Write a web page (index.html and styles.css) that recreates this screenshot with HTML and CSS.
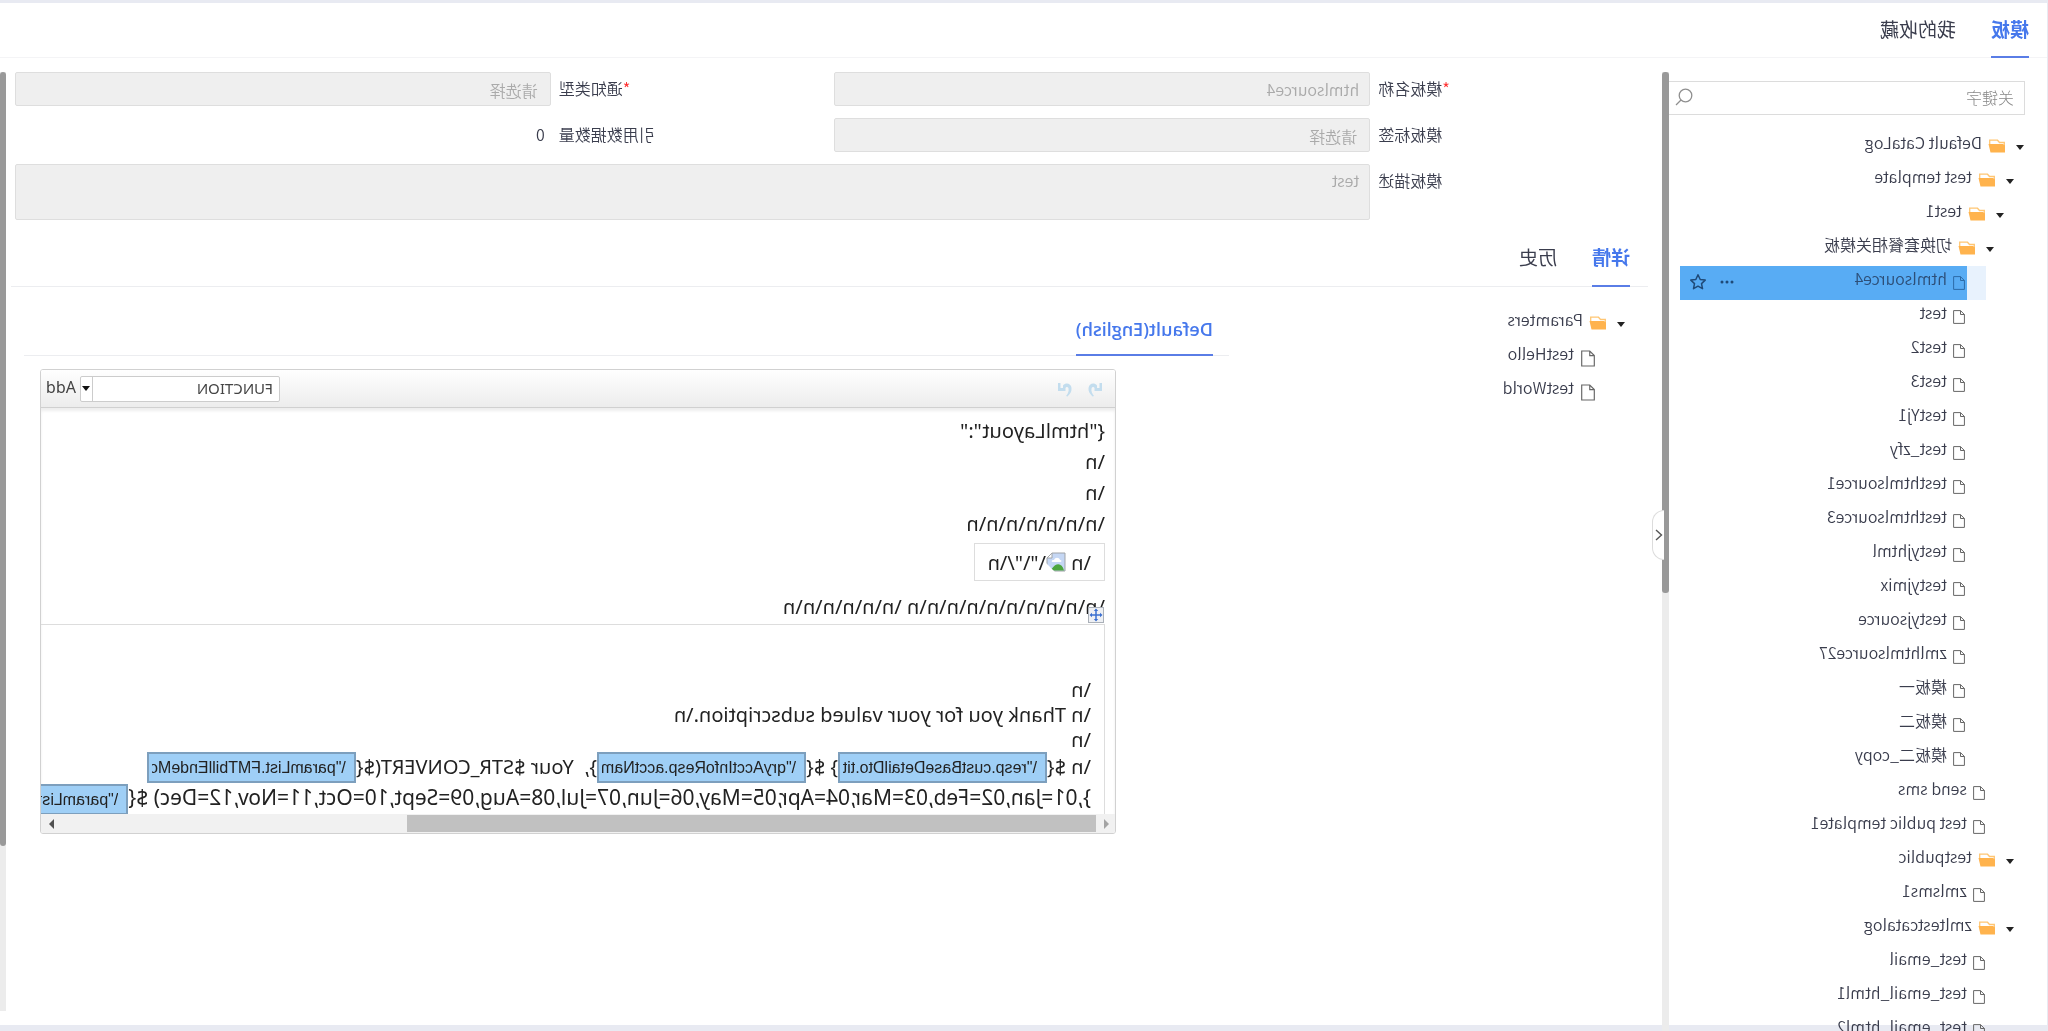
FILE: index.html
```html
<!DOCTYPE html>
<html lang="zh-CN">
<head>
<meta charset="utf-8">
<title>模板</title>
<link rel="stylesheet" href="styles.css">
</head>
<body>
<svg class="defs" aria-hidden="true">
  <symbol id="folder" viewBox="0 0 18 14"><path d="M1.700 13V3.500h4.800l2-2.300H16.300V6" fill="none" stroke="#ffc673" stroke-width="1.300"/><path d="M1 13.500V6.500l2-1.500H17.500l-2 8.500z" fill="#ffb34d"/></symbol>
  <symbol id="file" viewBox="0 0 12 14"><path d="M4.500 .6h6.900v12.800H.6V4.500zM4.500 .6v3.900H.6" fill="none" stroke="currentColor" stroke-width="1"/></symbol>
  <symbol id="undo" viewBox="0 0 16 16"><path d="M1 2h2.500v5H6V4.500C9 1 14 2.500 14.500 7c.4 3.500-1.500 6-4 8.500L9 15c2-2.500 3-5 2.500-7.500C11 5.500 9 5.500 8.500 7v3H1z" fill="#c3ddee"/></symbol>
</svg>
<div class="panel">
  <nav class="tabs top-tabs"><a href="#" class="tab active">模板</a><a href="#" class="tab">我的收藏</a></nav>
  <div class="layout">
    <aside class="sidebar">
      <div class="side-body">
        <div class="search">
          <input type="text" placeholder="关键字" aria-label="关键字">
          <svg width="18" height="18" viewBox="0 0 18 18" fill="none" stroke="#8f8f8f" stroke-width="1.300"><circle cx="7.500" cy="7.500" r="6.300"/><path d="m12 12 5 5"/></svg>
        </div>
        <ul class="tree">
          <li><div class="row"><i class="caret"></i><span class="node"><svg class="folder"><use href="#folder"/></svg><span>Default CataLog</span></span></div>
          <ul>
            <li><div class="row"><i class="caret"></i><span class="node"><svg class="folder"><use href="#folder"/></svg><span>test template</span></span></div>
            <ul>
              <li><div class="row"><i class="caret"></i><span class="node"><svg class="folder"><use href="#folder"/></svg><span>test1</span></span></div>
              <ul>
                <li><div class="row"><i class="caret"></i><span class="node"><svg class="folder"><use href="#folder"/></svg><span>切换套餐相关模板</span></span></div>
                <ul>
                  <li><div class="row selected"><i class="slot"></i><span class="node"><svg class="file"><use href="#file"/></svg><span>htmlsource4</span>
                    <span class="tools"><button type="button" aria-label="更多"><svg width="14" height="4" viewBox="0 0 14 4" fill="currentColor"><circle cx="2" cy="2" r="1.500"/><circle cx="7" cy="2" r="1.500"/><circle cx="12" cy="2" r="1.500"/></svg></button><button type="button" aria-label="收藏"><svg width="16" height="16" viewBox="0 0 16 16" fill="none" stroke="currentColor" stroke-width="1.500" stroke-linejoin="round"><path d="m8 .8 2.200 4.700 5 .6-3.700 3.500 1 5.100L8 12.200l-4.500 2.500 1-5.100L.8 6.100l5-.6z"/></svg></button></span></span></div></li>
                  <li><div class="row"><i class="slot"></i><span class="node"><svg class="file"><use href="#file"/></svg><span>test</span></span></div></li>
                  <li><div class="row"><i class="slot"></i><span class="node"><svg class="file"><use href="#file"/></svg><span>test2</span></span></div></li>
                  <li><div class="row"><i class="slot"></i><span class="node"><svg class="file"><use href="#file"/></svg><span>test3</span></span></div></li>
                  <li><div class="row"><i class="slot"></i><span class="node"><svg class="file"><use href="#file"/></svg><span>testYj1</span></span></div></li>
                  <li><div class="row"><i class="slot"></i><span class="node"><svg class="file"><use href="#file"/></svg><span>test_zfy</span></span></div></li>
                  <li><div class="row"><i class="slot"></i><span class="node"><svg class="file"><use href="#file"/></svg><span>testhtmlsource1</span></span></div></li>
                  <li><div class="row"><i class="slot"></i><span class="node"><svg class="file"><use href="#file"/></svg><span>testhtmlsource3</span></span></div></li>
                  <li><div class="row"><i class="slot"></i><span class="node"><svg class="file"><use href="#file"/></svg><span>testyjhtml</span></span></div></li>
                  <li><div class="row"><i class="slot"></i><span class="node"><svg class="file"><use href="#file"/></svg><span>testyjmix</span></span></div></li>
                  <li><div class="row"><i class="slot"></i><span class="node"><svg class="file"><use href="#file"/></svg><span>testyjsource</span></span></div></li>
                  <li><div class="row"><i class="slot"></i><span class="node"><svg class="file"><use href="#file"/></svg><span>zmlhtmlsource27</span></span></div></li>
                  <li><div class="row"><i class="slot"></i><span class="node"><svg class="file"><use href="#file"/></svg><span>模板一</span></span></div></li>
                  <li><div class="row"><i class="slot"></i><span class="node"><svg class="file"><use href="#file"/></svg><span>模板二</span></span></div></li>
                  <li><div class="row"><i class="slot"></i><span class="node"><svg class="file"><use href="#file"/></svg><span>模板二_copy</span></span></div></li>
                </ul></li>
              </ul></li>
              <li><div class="row"><i class="slot"></i><span class="node"><svg class="file"><use href="#file"/></svg><span>send sms</span></span></div></li>
              <li><div class="row"><i class="slot"></i><span class="node"><svg class="file"><use href="#file"/></svg><span>test public template1</span></span></div></li>
            </ul></li>
            <li><div class="row"><i class="caret"></i><span class="node"><svg class="folder"><use href="#folder"/></svg><span>testpublic</span></span></div>
            <ul><li><div class="row"><i class="slot"></i><span class="node"><svg class="file"><use href="#file"/></svg><span>zmlsms1</span></span></div></li></ul></li>
            <li><div class="row"><i class="caret"></i><span class="node"><svg class="folder"><use href="#folder"/></svg><span>zmltestcatalog</span></span></div>
            <ul>
              <li><div class="row"><i class="slot"></i><span class="node"><svg class="file"><use href="#file"/></svg><span>test_email</span></span></div></li>
              <li><div class="row"><i class="slot"></i><span class="node"><svg class="file"><use href="#file"/></svg><span>test_email_html1</span></span></div></li>
              <li><div class="row"><i class="slot"></i><span class="node"><svg class="file"><use href="#file"/></svg><span>test_email_html2</span></span></div></li>
            </ul></li>
          </ul></li>
        </ul>
      </div>
      <div class="vbar"><div class="thumb side-thumb"></div></div>
      <button type="button" class="collapse" aria-label="收起"><svg width="8" height="12" viewBox="0 0 8 12" fill="none" stroke="#555" stroke-width="1.400"><path d="M7 1 1.500 6 7 11"/></svg></button>
    </aside>
    <main class="main">
      <form class="form">
        <label for="name"><b>*</b>模板名称</label><input id="name" type="text" value="htmlsource4" disabled>
        <label for="type"><b>*</b>通知类型</label><select id="type" disabled><option>请选择</option></select>
        <label for="tag">模板标签</label><select id="tag" disabled><option>请选择</option></select>
        <label for="count">引用数据数量</label><output id="count">0</output>
        <label for="desc">模板描述</label><textarea id="desc" class="wide" disabled>test</textarea>
      </form>
      <nav class="tabs detail-tabs"><a href="#" class="tab active">详情</a><a href="#" class="tab">历史</a></nav>
      <div class="detail">
        <ul class="tree params">
          <li><div class="row"><i class="caret"></i><span class="node"><svg class="folder"><use href="#folder"/></svg><span>Paramters</span></span></div>
          <ul>
            <li><div class="row"><i class="slot"></i><span class="node"><svg class="file"><use href="#file"/></svg><span>testHello</span></span></div></li>
            <li><div class="row"><i class="slot"></i><span class="node"><svg class="file"><use href="#file"/></svg><span>testWorld</span></span></div></li>
          </ul></li>
        </ul>
        <section class="content">
          <nav class="tabs lang-tabs"><a href="#" class="tab active">Default(English)</a></nav>
          <div class="editor">
            <div class="toolbar">
              <button type="button" aria-label="Undo"><svg width="16" height="16"><use href="#undo"/></svg></button>
              <button type="button" class="redo" aria-label="Redo"><svg width="16" height="16"><use href="#undo"/></svg></button>
              <div class="combo"><input type="text" value="FUNCTION" aria-label="Function"><button type="button" class="drop" aria-label="Open"><i></i></button></div>
              <button type="button" class="add">Add</button>
            </div>
            <div class="doc">
              <p>{"htmlLayout":"</p>
              <p>\n</p>
              <p>\n</p>
              <p>\n\n\n\n\n\n\n</p>
              <div class="cell">\n <svg width="20" height="20" viewBox="0 0 20 20"><path d="M1 1h13l5 5v13H1z" fill="#c5d7f4" stroke="#a0a4a8"/><path d="M6 8c1-3 5-3 6 0 3 0 3 2 1 2H6c-2 0-2-2 0-2z" fill="#fff"/><path d="M2 18.500c2-8 8-8 12-2l3 2z" fill="#4da63f"/><path d="M14 1v5h5z" fill="#fff" stroke="#a0a4a8"/><path d="M20 11v9h-9z" fill="#fff"/></svg>\"\"/\n</div>
              <p class="long">\n\n\n\n\n\n\n\n\n\n \n\n\n\n\n\n<span class="move"><svg width="16" height="16" viewBox="0 0 16 16"><rect x=".5" y=".5" width="15" height="15" fill="#eef0f4" stroke="#aab0b8"/><path d="M8 3v10M3 8h10" stroke="#3b6fd0" stroke-width="1.500"/><path d="m8 1.500 2.200 2.500H5.800zM8 14.500 5.800 12h4.400zM1.500 8 4 5.800v4.400zM14.500 8 12 10.200V5.800z" fill="#3b6fd0"/></svg></span></p>
              <div class="table">
                <p>\n</p>
                <p>\n Thank you for your valued subscription.\n</p>
                <p>\n</p>
                <p class="vars">\n ${<input type="text" aria-label="title" value="\&quot;resp.custBaseDetailDto.tit">} ${<input type="text" aria-label="account" value="\&quot;qryAcctInfoResp.acctNam">},&nbsp; Your $STR_CONVERT(${<input type="text" aria-label="month" value="\&quot;paramList.FMTbillEndeMo"></p>
                <p class="vars months">},01=Jan,02=Feb,03=Mar,04=Apr,05=May,06=Jun,07=Jul,08=Aug,09=Sept,10=Oct,11=Nov,12=Dec) ${<input type="text" aria-label="param" value="\&quot;paramList.FMTbillEndeMo"></p>
              </div>
            </div>
            <div class="hbar"><i class="arrow prev"></i><div class="hthumb"></div><i class="arrow next"></i></div>
          </div>
        </section>
      </div>
      <div class="vbar"><div class="thumb main-thumb"></div></div>
    </main>
  </div>
</div>
</body>
</html>
```
FILE: styles.css
```css
* { box-sizing: border-box; }
body {
  margin: 0;
  height: 100vh;
  padding: 3px 0 6px 1px;
  overflow: hidden;
  background: #e8eaf2;
  color: #3a3d4d;
  font: 16px/34px "Noto Sans CJK SC", sans-serif;
  /* the whole interface is shown mirrored */
  transform: scaleX(-1);
}
.defs { position: absolute; width: 0; height: 0; }
ul { list-style: none; margin: 0; padding: 0; }
p { margin: 0; }
a { color: inherit; text-decoration: none; }
input, select, textarea, button { font: inherit; color: inherit; margin: 0; }
button { border: 0; padding: 0; background: none; display: flex; align-items: center; }
svg { flex: none; }

.panel { display: flex; flex-direction: column; height: 100%; background: #fff; }
.tabs { display: flex; gap: 35px; flex: none; border-bottom: 1px solid #ecedf0; font-size: 19px; }
.tab { margin-bottom: -1px; border-bottom: 2px solid transparent; }
.tab.active { color: #4678ec; border-color: #5a7de6; font-weight: 700; }
.top-tabs { height: 55px; padding-left: 18px; line-height: 52px; border-color: #f4f4f6; }

.layout { display: flex; flex: 1; min-height: 0; margin-bottom: -6px; padding-top: 14px; }
.sidebar { position: relative; display: flex; flex: none; width: 385px; }
.side-body { flex: 1; min-width: 0; padding: 9px 0 0 22px; overflow: hidden; }
.search { display: flex; align-items: center; height: 34px; padding: 0 6px 2px 10px; border: 1px solid #dcdcdc; border-right: 0; }
.search input { flex: 1; min-width: 0; border: 0; padding: 0; outline: 0; background: none; line-height: 30px; font-weight: 300; }
.search input::placeholder { color: #888; opacity: 1; }
.side-body .tree { margin: 15px 11px 0 -1px; }

.tree { font-weight: 350; }
.tree ul { padding-left: 10px; }
.row { display: flex; height: 34px; align-items: stretch; }
.slot, .caret { flex: none; width: 19px; display: flex; align-items: center; }
.caret::before { content: ""; margin-left: 2px; border: 4px solid transparent; border-top: 5px solid #222; border-bottom: 0; }
.node { display: flex; flex: 1; align-items: center; padding: 0 0 2px 1px; }
.node > span { line-height: 25px; height: 32px; white-space: nowrap; }
.folder { width: 18px; height: 14px; margin-right: 6px; }
.file { width: 12px; height: 14px; margin: 2px 6px 0 1px; color: #666; }
.selected .slot { background: #e8f2fd; }
.selected .node { background: #58acf4; color: #2d4f78; }
.selected .file { color: #2d6ca8; }
.node > .tools { display: flex; gap: 14px; margin-left: auto; padding-right: 10px; align-items: center; height: 28px; color: #1f4a78; }

.vbar { flex: none; width: 7px; background: #ececec; }
.thumb { background: #999; border-radius: 3px; }
.side-thumb { height: 54.3%; }
.main-thumb { height: 82.4%; }
.collapse { position: absolute; left: 383px; top: 438px; width: 12px; height: 50px; padding-left: 1px; background: #fff; border: 1px solid #dcdcdc; border-left: 0; border-radius: 0 12px 12px 0; }

.main { position: relative; display: grid; grid-template-rows: auto auto 1fr; grid-template-columns: 1fr auto; flex: 1; min-width: 0; padding-bottom: 20px; }
.main > .vbar { grid-column: 2; grid-row: 1 / 4; width: 6px; }
.form { display: grid; grid-template-columns: minmax(0, 1fr) minmax(0, 2fr) minmax(0, 1fr) minmax(0, 2fr); gap: 12px 8px; padding: 0 9px 0 16px; font-weight: 350; }
.form label { text-align: right; line-height: 32px; }
.form b { color: #f33; font-weight: 400; }
.form input, .form select, .form textarea { width: 100%; height: 34px; padding: 0 10px 1px; border: 1px solid #dedede; border-radius: 2px; background: #efefef; color: #aaa; opacity: 1; appearance: none; resize: none; display: block; }
.form select { padding: 0 12px; }
.form output { padding-left: 6px; line-height: 32px; }
.form .wide { grid-column: 2 / 5; height: 56px; line-height: 30px; }

.detail-tabs { margin: 10px 5px 0 14px; padding-left: 18px; height: 57px; line-height: 54px; }
.detail-tabs .tab { height: 57px; }
.detail { grid-column: 1; display: grid; grid-template-columns: 413px minmax(0, 1fr); padding-left: 20px; }
.params { padding: 20px 0 0 14px; }
.params .file { width: 14px; height: 17px; margin: 2px 7px 0 2px; }
.params .row { margin-left: 1px; }
.content { padding-right: 18px; }
.lang-tabs { padding-left: 16px; margin-top: 17px; height: 52px; line-height: 50px; }
.lang-tabs .tab.active { font-family: "Open Sans", sans-serif; font-size: 18px; font-weight: 600; }

.editor { margin: 13px 16px 0 113px; border: 1px solid #d1d1d1; border-radius: 3px; overflow: hidden; }
.toolbar { display: flex; align-items: center; gap: 14px; height: 38px; padding: 0 5px 0 12px; border-bottom: 1px solid #d0d0d0; background: linear-gradient(#fff, #ececec); font-family: "Noto Sans", sans-serif; line-height: 22px; color: #444; }
.redo svg { transform: scaleX(-1); }
.combo { display: flex; width: 200px; height: 26px; margin-left: auto; border: 1px solid #ccc; border-radius: 2px; background: #fff; }
.combo input { flex: 1; min-width: 0; border: 0; padding: 0 6px 2px; background: none; font-size: 15px; }
.drop { width: 12px; justify-content: center; border-left: 1px solid #ccc; }
.drop i { border: 4px solid transparent; border-top: 5px solid #111; border-bottom: 0; }
.add { margin-left: -10px; padding-bottom: 3px; }

.doc { height: 406px; padding: 7px 0 0 10px; overflow: hidden; color: #222; font-family: "Noto Sans", sans-serif; font-size: 20px; line-height: 31px; white-space: nowrap; box-shadow: inset 0 3px 3px #eee; }
.cell { display: flex; width: max-content; height: 38px; margin: 4px 0 10px; padding: 0 13px; align-items: center; border: 1px solid #ddd; white-space: pre; }
.long { position: relative; }
.move { position: absolute; left: 1px; top: 16px; line-height: 0; background: #fff; }
.table { margin-top: 2px; padding: 52px 0 0 13px; height: 200px; border: 1px solid #ddd; border-width: 1px 0 0 1px; line-height: 25px; }
.vars { line-height: 30px; height: 32px; display: flex; white-space: pre; }
.months { line-height: 26px; font-size: 21px; }
.vars input { width: 209px; height: 31px; flex: none; padding: 0 3px 0 8px; border: 2px solid #7d9fbd; background: #9fcff6; font: 16px/26px "Liberation Sans", Arial, sans-serif; }
.hbar { display: flex; align-items: center; height: 19px; padding: 0 8px 0 6px; background: #f1f1f1; gap: 8px; }
.hthumb { width: 65%; height: 17px; background: #c1c1c1; }
.arrow { border: 5px solid transparent; }
.prev { border-right-color: #a3a3a3; border-left: 0; }
.next { margin-left: auto; border-left-color: #505050; border-right: 0; }
```
